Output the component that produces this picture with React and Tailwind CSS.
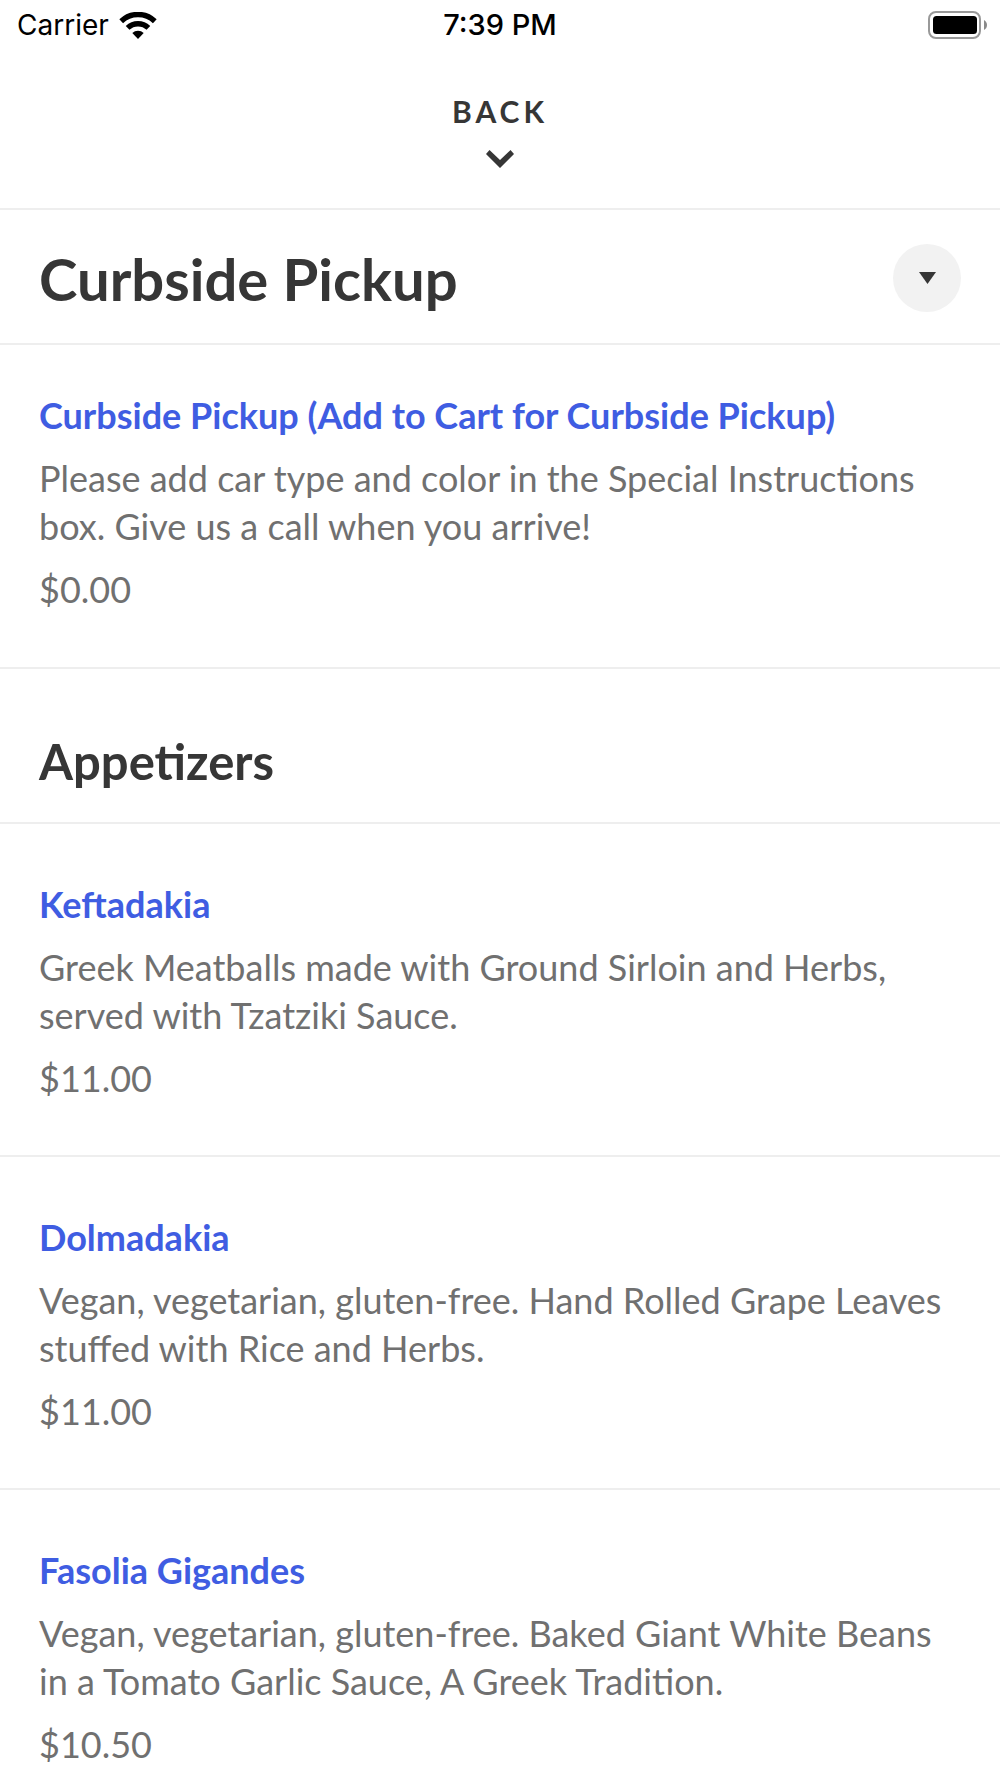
const items = [
  { name: 'Keftadakia', text: 'Greek Meatballs made with Ground Sirloin and Herbs, served with Tzatziki Sauce.', price: '$11.00' },
  { name: 'Dolmadakia', text: 'Vegan, vegetarian, gluten-free. Hand Rolled Grape Leaves stuffed with Rice and Herbs.', price: '$11.00' },
  { name: 'Fasolia Gigandes', text: 'Vegan, vegetarian, gluten-free. Baked Giant White Beans in a Tomato Garlic Sauce, A Greek Tradition.', price: '$10.50' },
];

function WifiIcon() {
  return (
    <svg className="h-[27px] w-[38px]" viewBox="0 0 38 27" fill="none" stroke="currentColor" strokeWidth="5.4" aria-hidden="true">
      <path d="M2.2 9.2A24.3 24.3 0 0 1 35.8 9.2" />
      <path d="M8.6 15.9A15.2 15.2 0 0 1 29.4 15.9" />
      <path d="M19 27L13.3 20.9A8.3 8.3 0 0 1 24.7 20.9Z" fill="currentColor" stroke="none" />
    </svg>
  );
}

function BatteryIcon() {
  return (
    <svg className="h-7 w-[59px]" viewBox="0 0 59 28" aria-hidden="true">
      <rect x="1" y="1" width="51" height="26" rx="7" fill="none" stroke="#999999" strokeWidth="2" />
      <rect x="5" y="5" width="44" height="18" rx="3.5" fill="#000000" />
      <path d="M56 9C60 11 60 17 56 19Z" fill="#8a8a8a" />
    </svg>
  );
}

function MenuItem({ name, text, price, first }) {
  return (
    <li className={`border-b-2 border-[#eeeeee] px-[39px] ${first ? 'pt-[46px] pb-[54px]' : 'pt-[56px] pb-[53px]'}`}>
      <a href="#" className="block text-[36px] leading-[48px] font-bold text-[#3f5de2]">{name}</a>
      <p className="mt-[15px] text-[36px] leading-[48px]">{text}</p>
      <p className="mt-[15px] text-[36px] leading-[48px]">{price}</p>
    </li>
  );
}

export default function App() {
  return (
    <div className="h-screen overflow-y-auto bg-white font-['Lato',sans-serif] text-[#707070] [scrollbar-width:none]">
      <header className="border-b-2 border-[#eeeeee]">
        <div className="grid h-[50px] grid-cols-3 items-center px-[13px] font-['Inter',sans-serif] text-[28px] text-black">
          <div className="flex items-center gap-[10px] pl-1">
            <span>Carrier</span>
            <WifiIcon />
          </div>
          <time className="text-center text-[29px] font-medium">7:39 PM</time>
          <div className="flex justify-end">
            <BatteryIcon />
          </div>
        </div>
        <button className="mx-auto mt-[43px] mb-10 flex flex-col items-center gap-[21px] font-bold text-[#363636]">
          <span className="text-[30px] leading-9 tracking-[4px]">BACK</span>
          <svg className="h-[18px] w-7" viewBox="0 0 28 18" fill="currentColor" aria-hidden="true">
            <path d="M0 4L3.5 0L14 10L24.5 0L28 4L14 18Z" />
          </svg>
        </button>
      </header>
      <main>
        <div className="flex items-center justify-between border-b-2 border-[#eeeeee] px-[39px] pt-[34px] pb-[31px]">
          <h1 className="pt-0.5 text-[58px] leading-[64px] font-bold text-[#363636]">Curbside Pickup</h1>
          <button aria-label="Choose category" className="flex size-[68px] items-center justify-center rounded-full bg-[#f2f2f2] text-[#363636]">
            <svg className="h-3 w-[17px]" viewBox="0 0 17 12" fill="currentColor" aria-hidden="true">
              <path d="M0 0H17L8.5 12Z" />
            </svg>
          </button>
        </div>
        <ul>
          <MenuItem first name="Curbside Pickup (Add to Cart for Curbside Pickup)" text="Please add car type and color in the Special Instructions box. Give us a call when you arrive!" price="$0.00" />
        </ul>
        <h2 className="border-b-2 border-[#eeeeee] px-[39px] pt-[62px] pb-[31px] text-[49px] leading-[60px] font-bold text-[#363636]">Appetizers</h2>
        <ul>{items.map((item) => <MenuItem key={item.name} {...item} />)}</ul>
      </main>
    </div>
  );
}
